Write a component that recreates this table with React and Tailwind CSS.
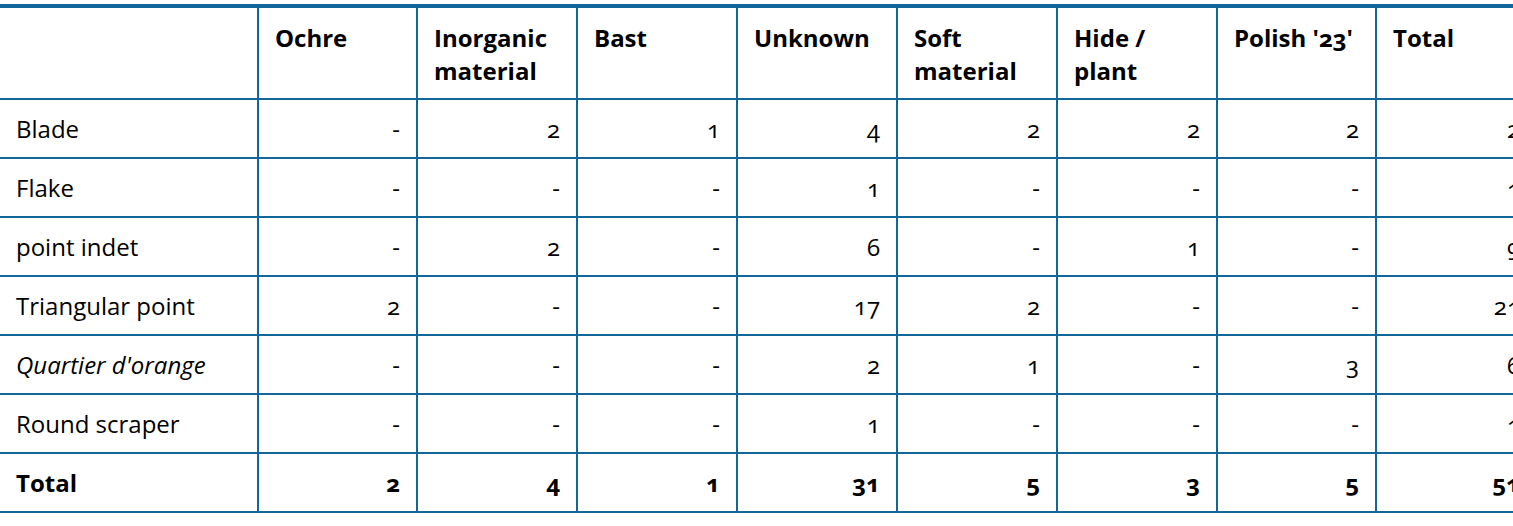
const cols = ["Ochre", "Inorganic material", "Bast", "Unknown", "Soft material", "Hide / plant", "Polish '23'", "Total"];

const rows = [
  { name: "Blade", values: ["-", "2", "1", "4", "2", "2", "2", "2"] },
  { name: "Flake", values: ["-", "-", "-", "1", "-", "-", "-", "1"] },
  { name: "point indet", values: ["-", "2", "-", "6", "-", "1", "-", "9"] },
  { name: "Triangular point", values: ["2", "-", "-", "17", "2", "-", "-", "21"] },
  { name: "Quartier d'orange", italic: true, values: ["-", "-", "-", "2", "1", "-", "3", "6"] },
  { name: "Round scraper", values: ["-", "-", "-", "1", "-", "-", "-", "1"] },
];

const totals = ["2", "4", "1", "31", "5", "3", "5", "51"];

export default function App() {
  return (
    <div className="w-[1513px] h-[526px] overflow-hidden bg-white pt-1 text-black font-['Open_Sans','Noto_Sans',sans-serif]">
      <table className="table-fixed border-collapse w-[1536px] text-[24px] leading-[33px] oldstyle-nums">
        <colgroup>
          <col className="w-[258px]" />
          <col className="w-[159px]" />
          <col className="w-[160px]" />
          <col className="w-[160px]" />
          <col className="w-[160px]" />
          <col className="w-[160px]" />
          <col className="w-[160px]" />
          <col className="w-[159px]" />
          <col className="w-[160px]" />
        </colgroup>
        <thead>
          <tr className="border-t-4 border-[#11679a]">
            <th className="border-b-2 border-[#11679a]"></th>
            {cols.map((c) => (
              <th
                key={c}
                className="border-b-2 border-l-2 border-[#11679a] px-4 pt-[13px] pb-[11px] text-left align-top font-bold"
              >
                {c}
              </th>
            ))}
          </tr>
        </thead>
        <tbody>
          {rows.map((r) => (
            <tr key={r.name}>
              <td className={`border-b-2 border-[#11679a] px-4 py-3 text-left ${r.italic ? "italic" : ""}`}>
                {r.name}
              </td>
              {r.values.map((v, i) => (
                <td key={i} className="border-b-2 border-l-2 border-[#11679a] px-4 py-3 text-right">
                  {v}
                </td>
              ))}
            </tr>
          ))}
          <tr>
            <td className="border-b-2 border-[#11679a] px-4 py-3 text-left font-bold">Total</td>
            {totals.map((v, i) => (
              <td key={i} className="border-b-2 border-l-2 border-[#11679a] px-4 py-3 text-right font-bold">
                {v}
              </td>
            ))}
          </tr>
        </tbody>
      </table>
    </div>
  );
}
